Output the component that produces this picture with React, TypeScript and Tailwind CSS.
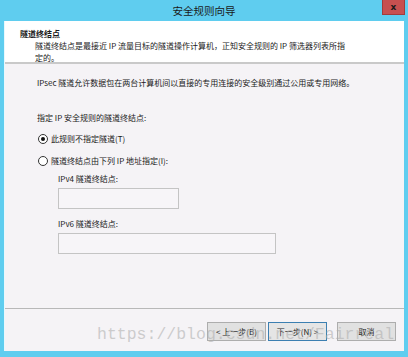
import React from 'react';

const cjk = { fontFamily: '"Noto Sans CJK SC", "Noto Sans", sans-serif' };

const Radio: React.FC<{ checked?: boolean; label: string }> = ({ checked, label }) => (
  <div className="flex items-center h-[12px]">
    <span className="w-[10px] h-[10px] rounded-full border border-[#333] bg-white flex items-center justify-center">
      {checked && <span className="w-[4px] h-[4px] rounded-full bg-[#111]" />}
    </span>
    <span className="ml-[3px]">{label}</span>
  </div>
);

const Button: React.FC<{ label: string; primary?: boolean; className?: string }> = ({ label, primary, className }) => (
  <div
    className={`w-[59px] h-[19px] flex items-center justify-center text-[8px] ${
      primary ? 'border border-[#3c7fb1] bg-[#e5e5e5]' : 'border border-[#adadad] bg-[#e1e1e1]'
    } ${className ?? ''}`}
  >
    {label}
  </div>
);

export default function App() {
  return (
    <div className="relative w-[408px] h-[357px] bg-[#5fcdef] flex flex-col text-[#1a1a1a]" style={cjk}>
      {/* title bar */}
      <div className="relative h-[21px] flex items-center justify-center shrink-0">
        <span className="text-[10.5px] text-[#1a1a1a]">安全规则向导</span>
        <div className="absolute right-[3px] top-0 w-[23px] h-[15px] bg-[#c75050] border border-[#a13c3c] border-t-0 flex items-center justify-center">
          <span className="text-[9px] font-bold text-[#1a1a1a] leading-none" style={{ fontFamily: '"DejaVu Sans", sans-serif' }}>x</span>
        </div>
      </div>

      <div className="mx-[4px] flex-1 flex flex-col bg-[#f5f3f6] border-l border-[#e8f8fd]">
        {/* header */}
        <div className="h-[41px] bg-white shrink-0 pl-[15px] pt-[7px] text-[8px] leading-[12px]">
          <div className="font-bold">隧道终结点</div>
          <div className="pl-[15px]">
            隧道终结点是最接近 IP 流量目标的隧道操作计算机，正知安全规则的 IP 筛选器列表所指
            <br />
            定的。
          </div>
        </div>
        <div className="h-[2px] bg-[#c9c9c9] shrink-0" />

        {/* body */}
        <div className="flex-1 flex flex-col pl-[32px] pt-[13px] text-[8px] leading-[12px]">
          <div>IPsec 隧道允许数据包在两台计算机间以直接的专用连接的安全级别通过公用或专用网络。</div>
          <div className="mt-[23px]">指定 IP 安全规则的隧道终结点:</div>
          <div className="mt-[9px] ml-[1px]">
            <Radio checked label="此规则不指定隧道(T)" />
          </div>
          <div className="mt-[10px] ml-[1px]">
            <Radio label="隧道终结点由下列 IP 地址指定(I):" />
          </div>
          <div className="pl-[21px] mt-[6px]">
            <div>IPv4 隧道终结点:</div>
            <div className="mt-[3px] w-[121px] h-[21px] border border-[#c4c4c4] bg-[#f7f5f8]" />
            <div className="mt-[9px]">IPv6 隧道终结点:</div>
            <div className="mt-[3px] w-[218px] h-[21px] border border-[#c4c4c4] bg-[#f7f5f8]" />
          </div>
        </div>

        <div className="h-[1px] bg-[#b8b8b8] shrink-0" />
        {/* footer */}
        <div className="h-[42px] shrink-0 flex items-start justify-end pt-[13px] pr-[8px]">
          <Button label="< 上一步(B)" />
          <Button label="下一步(N) >" primary className="ml-[2px]" />
          <Button label="取消" className="ml-[10px]" />
        </div>
      </div>
      <div className="h-[6px] shrink-0" />

      {/* watermark */}
      <div
        className="absolute left-[97px] top-[326px] text-[16.5px] leading-[18px] text-[#b0b0b0]/60 pointer-events-none whitespace-nowrap"
        style={{ fontFamily: '"Liberation Mono", monospace' }}
      >
        https://blog.csdn.net/Fairreal
      </div>
    </div>
  );
}
